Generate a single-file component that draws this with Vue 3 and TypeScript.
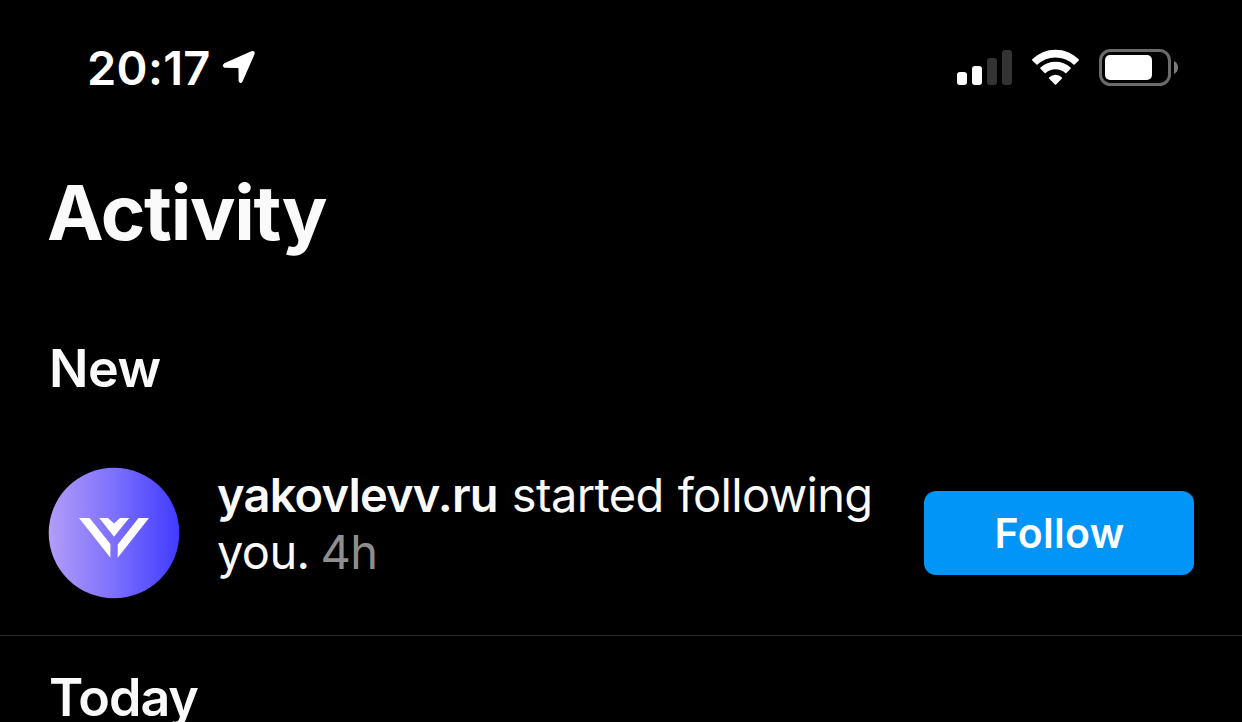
<template>
  <div class="screen">
    <header class="status-bar">
      <div class="status-bar__time">
        <span>{{ time }}</span>
        <svg class="status-bar__location" width="34" height="34" viewBox="0 0 34 34">
          <path
            d="M2.6 14 L29.6 2 Q32.6 1.2 31.7 4.2 L19.9 31 Q18.6 33.4 17.4 31 L17.3 18.8 Q17.2 17.2 15.6 17.2 L2.8 17 Q.4 15.8 2.6 14 Z"
            fill="#fff"
            stroke="#fff"
            stroke-width="1.6"
            stroke-linejoin="round"
          />
        </svg>
      </div>
      <div class="status-bar__icons">
        <svg width="55" height="37" viewBox="0 0 55 37">
          <rect
            v-for="(bar, i) in bars"
            :key="i"
            :x="i * 15"
            :y="36 - bar.height"
            width="10"
            :height="bar.height"
            rx="3"
            :fill="bar.active ? '#fff' : '#333'"
          />
        </svg>
        <svg class="status-bar__wifi" width="49" height="37" viewBox="0 0 49 37">
          <g fill="#fff" stroke="#fff" stroke-width="1.6" stroke-linejoin="round">
            <path d="M1.8 10.9 A32 32 0 0 1 47.2 10.9 L43 15 A27 27 0 0 0 6 15 Z" />
            <path d="M10 19.2 A21.5 21.5 0 0 1 39 19.2 L34.8 23.4 A15.6 15.6 0 0 0 14.2 23.4 Z" />
            <path d="M18.6 29 A8.6 8.6 0 0 1 30.4 29 L24.5 35 Z" />
          </g>
        </svg>
        <svg class="status-bar__battery" width="79" height="37" viewBox="0 0 79 37">
          <rect x="1.5" y="1.5" width="69" height="34" rx="10" fill="none" stroke="#6b6b6b" stroke-width="3" />
          <rect x="6" y="6" width="47" height="25" rx="5" fill="#fff" />
          <path d="M75 12 Q79 14 79 18.5 T75 25 Z" fill="#7c7c7c" />
        </svg>
      </div>
    </header>

    <h1 class="title">Activity</h1>

    <section class="section section--new">
      <h2 class="section__title">New</h2>
      <div class="activity">
        <svg class="activity__avatar" width="132" height="132" viewBox="0 0 132 132">
          <defs>
            <linearGradient id="avatar-bg" x1="0" y1="0" x2="1" y2="0">
              <stop offset="0" stop-color="#b29df9" />
              <stop offset="0.5" stop-color="#7d70fd" />
              <stop offset="1" stop-color="#403bff" />
            </linearGradient>
          </defs>
          <circle cx="66" cy="66" r="65.3" fill="url(#avatar-bg)" />
          <g fill="#fff">
            <path d="M31 51 H41.5 L62.4 77 V90.8 Z" />
            <path d="M101 51 H90.5 L69.7 77.5 V90.8 Z" />
            <path d="M51.2 51 H60 L66 56.4 L72 51 H81.2 L66 69.8 Z" />
          </g>
        </svg>
        <p class="activity__text">
          <span class="activity__user">{{ activity.user }}</span>
          <span class="activity__action">{{ ' ' + activity.action + ' ' }}</span>
          <span class="activity__age">{{ activity.age }}</span>
        </p>
        <button type="button" class="activity__follow">Follow</button>
      </div>
    </section>

    <section class="section section--today">
      <h2 class="section__title">Today</h2>
    </section>
  </div>
</template>

<script setup lang="ts">
interface Activity {
  user: string
  action: string
  age: string
}

interface SignalBar {
  height: number
  active: boolean
}

const time = '20:17'

const bars: SignalBar[] = [
  { height: 13, active: true },
  { height: 19, active: true },
  { height: 27, active: false },
  { height: 35, active: false },
]

const activity: Activity = {
  user: 'yakovlevv.ru',
  action: 'started following you.',
  age: '4h',
}
</script>

<style>
body {
  margin: 0;
  background: #000;
}
</style>

<style scoped>
.screen {
  box-sizing: border-box;
  width: 1242px;
  height: 722px;
  overflow: hidden;
  background: #000;
  color: #fafafa;
  font-family: Inter, 'Liberation Sans', sans-serif;
}
.status-bar {
  display: flex;
  justify-content: space-between;
  align-items: flex-start;
  padding: 38px 64px 0 87px;
  height: 129px;
  box-sizing: border-box;
}
.status-bar__time {
  display: flex;
  color: #fff;
  font-size: 47px;
  font-weight: 600;
  line-height: 60px;
  letter-spacing: 0.3px;
}
.status-bar__location {
  margin: 12px 0 0 11px;
}
.status-bar__icons {
  display: flex;
  padding-top: 11px;
}
.status-bar__wifi {
  margin-left: 19px;
}
.status-bar__battery {
  margin-left: 19px;
}
.title {
  margin: 38px 0 0 47px;
  font-size: 76px;
  font-weight: 700;
  line-height: 90px;
  letter-spacing: -1.3px;
}
.section__title {
  margin: 0;
  padding-left: 49px;
  font-size: 52px;
  font-weight: 600;
  line-height: 64px;
  letter-spacing: -0.5px;
}
.section--new {
  padding: 80px 0 36px;
  border-bottom: 1px solid #262626;
}
.section--today {
  padding-top: 30px;
}
.section--today .section__title {
  letter-spacing: -1px;
}
.activity {
  display: flex;
  align-items: flex-start;
  margin-top: 66px;
  padding: 0 48px;
}
.activity__avatar {
  flex: none;
}
.activity__text {
  flex: none;
  width: 690px;
  margin: -1px 0 0 37px;
  font-size: 47px;
  line-height: 57px;
  letter-spacing: -0.65px;
  word-spacing: 1.5px;
}
.activity__user {
  font-weight: 600;
  letter-spacing: -0.8px;
}
.activity__age {
  margin-left: -3px;
  color: #8e8e8e;
}
.activity__follow {
  flex: none;
  width: 270px;
  height: 84px;
  margin: 24px 0 0 auto;
  padding: 0 0 0 1px;
  border: 0;
  border-radius: 12px;
  background: #0095f6;
  color: #fff;
  font-family: inherit;
  font-size: 41px;
  font-weight: 600;
  letter-spacing: 0.3px;
}
</style>
